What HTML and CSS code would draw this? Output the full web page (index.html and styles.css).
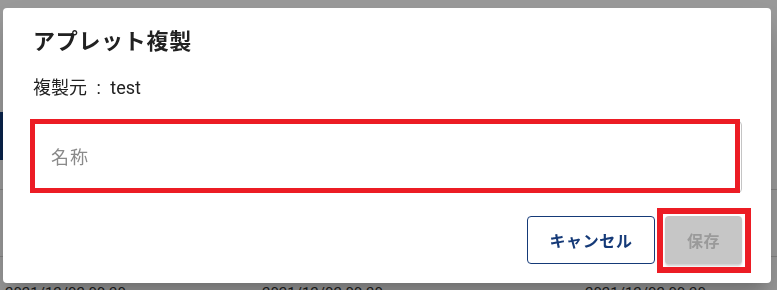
FILE: index.html
```html
<!DOCTYPE html>
<html lang="ja">
<head>
  <meta charset="UTF-8">
  <meta name="viewport" content="width=device-width, initial-scale=1.0">
  <title>アプレット複製</title>
  <link rel="stylesheet" href="styles.css">
</head>
<body>
  <!-- Page behind the dialog -->
  <div class="page">
    <div class="page-band"></div>
    <div class="page-row page-row-short"></div>
    <div class="page-row page-row-tall"></div>
    <div class="page-text">
      <span>2021/12/02 09:30</span>
      <span>2021/12/02 09:30</span>
      <span>2021/12/02 09:30</span>
    </div>
  </div>

  <div class="backdrop"></div>

  <!-- Dialog -->
  <div class="dialog" role="dialog" aria-labelledby="dialog-title">
    <h2 class="dialog-title" id="dialog-title">アプレット複製</h2>
    <p class="dialog-source">複製元 : test</p>

    <div class="field">
      <input type="text" class="field-input" placeholder="名称">
      <span class="mark mark-field"></span>
    </div>

    <div class="dialog-actions">
      <button class="btn btn-outline">キャンセル</button>
      <div class="btn-wrap">
        <button class="btn btn-disabled" disabled>保存</button>
        <span class="mark mark-save"></span>
      </div>
    </div>
  </div>
</body>
</html>
```

FILE: styles.css
```css
/* Global */
body, html {
  margin: 0;
  padding: 0;
  height: 100%;
  overflow: hidden;
  font-family: Roboto, "Noto Sans CJK JP", sans-serif;
  color: #212121;
}

/* Background page */
.page {
  background-color: #ffffff;
  height: 100%;
}

.page-band {
  margin-top: 112px;
  width: 300px;
  height: 48px;
  background-color: #0f3a7d;
}

.page-row {
  border-bottom: 1px solid #d8d8d8;
}

.page-row-short {
  height: 29px;
}

.page-row-tall {
  height: 66px;
}

.page-text {
  display: grid;
  grid-template-columns: 257px 323px 1fr;
  padding: 27px 0 0 5px;
  font-size: 15px;
  color: #333;
}

.backdrop {
  position: fixed;
  inset: 0;
  background-color: rgba(0, 0, 0, 0.4);
}

/* Dialog */
.dialog {
  position: fixed;
  left: 3px;
  top: 8px;
  width: 768px;
  height: 275px;
  box-sizing: border-box;
  padding: 19px 29px 0 30px;
  background-color: #ffffff;
  border-radius: 4px;
  box-shadow: 0 11px 15px -7px rgba(0, 0, 0, 0.2), 0 24px 38px 3px rgba(0, 0, 0, 0.14);
}

.dialog-title {
  margin: 0;
  font-size: 22px;
  line-height: 30px;
  font-weight: 700;
  letter-spacing: 0.7px;
}

.dialog-source {
  margin: 18px 0 0;
  font-size: 18px;
  line-height: 26px;
  word-spacing: 5px;
}

.field {
  position: relative;
  margin-top: 20px;
}

.field-input {
  display: block;
  width: 100%;
  height: 72px;
  box-sizing: border-box;
  padding: 0 17px;
  border: 1px solid #c4c4c4;
  border-radius: 4px;
  font-family: inherit;
  font-size: 18px;
  letter-spacing: 1px;
  color: #212121;
  outline: none;
}

.field-input::placeholder {
  color: #8a8a8a;
}

.dialog-actions {
  display: flex;
  justify-content: flex-end;
  gap: 10px;
  margin-top: 23px;
}

.btn {
  height: 48px;
  box-sizing: border-box;
  border-radius: 4px;
  font-family: inherit;
  font-size: 16px;
  font-weight: 700;
  letter-spacing: 0.6px;
  cursor: pointer;
}

.btn-outline {
  width: 128px;
  background-color: #ffffff;
  color: #153a78;
  border: 1px solid #153a78;
}

.btn-wrap {
  position: relative;
}

.btn-disabled {
  width: 77px;
  background-color: #c6c6c6;
  color: #9a9a9a;
  border: none;
  box-shadow: 0 2px 2px rgba(0, 0, 0, 0.18);
  cursor: default;
}

/* Red annotation boxes */
.mark {
  position: absolute;
  box-sizing: border-box;
  border: 5px solid #ec1c24;
  pointer-events: none;
}

.mark-field {
  left: -3px;
  top: -2px;
  width: 710px;
  height: 74px;
}

.mark-save {
  left: -8px;
  top: -8px;
  width: 94px;
  height: 65px;
  border-width: 6px;
}
```
